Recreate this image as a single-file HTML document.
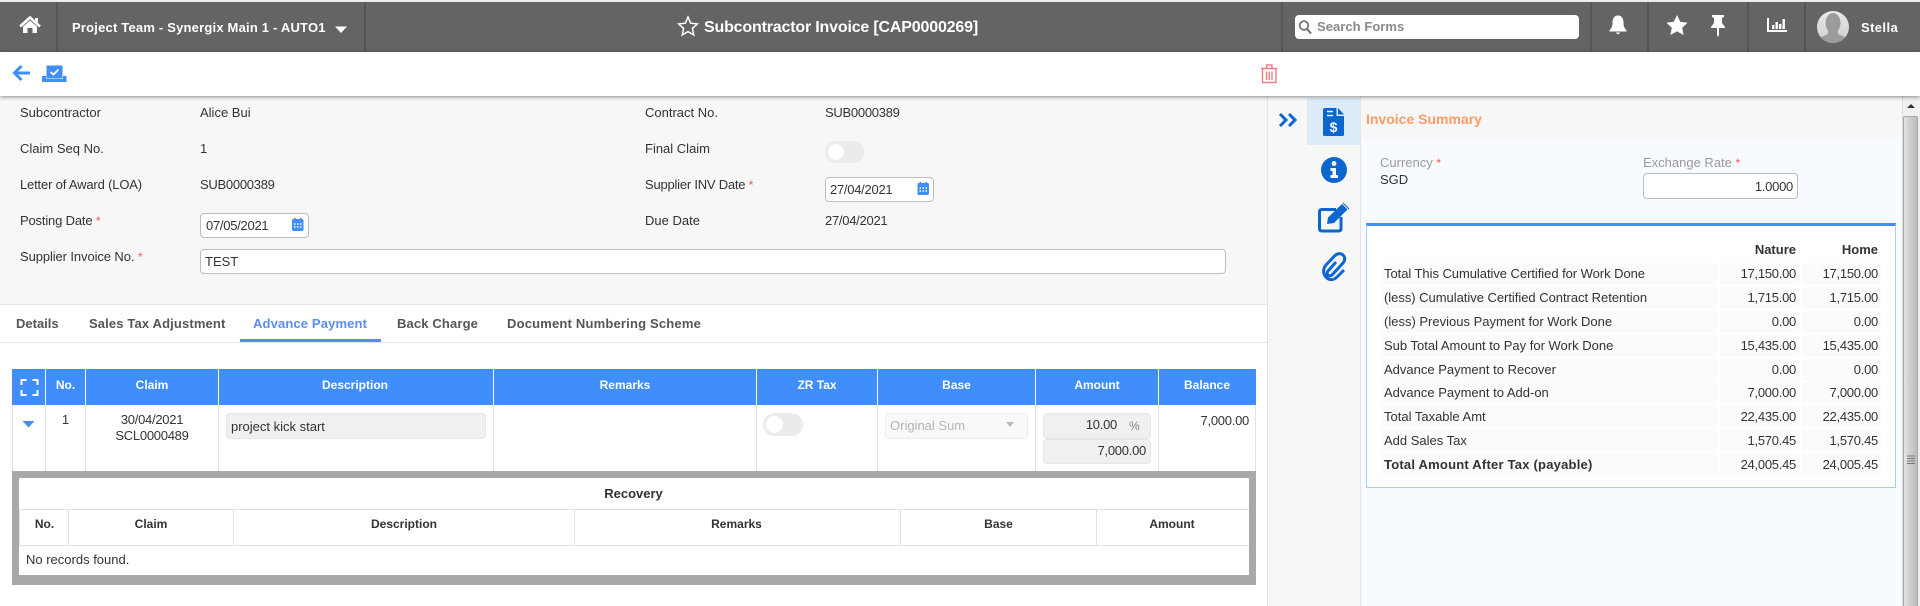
<!DOCTYPE html>
<html><head><meta charset="utf-8"><title>Subcontractor Invoice</title>
<style>
html,body{margin:0;padding:0;width:1920px;height:606px;overflow:hidden;background:#fff}
body{position:relative;font:13px/16px "Liberation Sans",Arial,sans-serif;color:#333}
.a{position:absolute;box-sizing:border-box}
.t{position:absolute;white-space:nowrap;line-height:16px}
.r{text-align:right}
.c{text-align:center}
.b{font-weight:bold}
.w{color:#fff}
.n{letter-spacing:-.27px}
.m{letter-spacing:-.17px}
.tab{letter-spacing:.14px;color:#555;font-weight:bold}
.st{color:#f55;font-size:12px}
.inp{position:absolute;box-sizing:border-box;background:#fff;border:1px solid #bdbdbd;border-radius:4px}
.dis{position:absolute;box-sizing:border-box;background:#f0f0f0;border:1px solid #e6e6e6;border-radius:4px}
.tg{position:absolute;box-sizing:border-box;background:#ebebeb;border-radius:12px}
.tg i{position:absolute;left:3px;top:3px;background:#fff;border-radius:50%;display:block}
.sep{position:absolute;top:2px;height:50px;width:2px;background:#565656}
.vw{position:absolute;top:369px;height:36px;width:1px;background:#fff}
.vg{position:absolute;top:405px;height:66px;width:1px;background:#e2e2e2}
.vi{position:absolute;top:509px;height:37px;width:1px;background:#e2e2e2}
.cell{position:absolute;background:#fbfbfb;height:21px}
</style></head><body>

<!-- top bar -->
<div class="a" style="left:0;top:0;width:1920px;height:2px;background:#ededed"></div>
<div class="a" style="left:0;top:2px;width:1920px;height:50px;background:#646464"></div>
<div class="sep" style="left:56px"></div>
<div class="sep" style="left:364px"></div>
<div class="sep" style="left:1281px"></div>
<div class="sep" style="left:1590px"></div>
<div class="sep" style="left:1647px"></div>
<div class="sep" style="left:1747px"></div>
<div class="sep" style="left:1804px"></div>
<div class="t b w" style="left:72px;top:20px;letter-spacing:.2px">Project Team - Synergix Main 1 - AUTO1</div>
<div class="t b w" style="left:704px;top:20px;font-size:16px;letter-spacing:-.18px">Subcontractor Invoice [CAP0000269]</div>
<div class="a" style="left:1295px;top:15px;width:284px;height:24px;background:#fff;border-radius:4px"></div>
<div class="t b" style="left:1317px;top:19px;color:#8a8a8a;letter-spacing:.05px">Search Forms</div>
<div class="t b w" style="left:1861px;top:20px;letter-spacing:.4px">Stella</div>

<!-- toolbar -->
<div class="a" style="left:0;top:52px;width:1920px;height:44px;background:#fff;box-shadow:0 1px 4px rgba(0,0,0,.45);z-index:3"></div>

<!-- form -->
<div class="a" style="left:0;top:96px;width:1267px;height:208px;background:#f7f7f7"></div>
<div class="a" style="left:0;top:304px;width:1267px;height:1px;background:#e4e4e4"></div>
<div class="t" style="left:20px;top:105px">Subcontractor</div>
<div class="t" style="left:200px;top:105px">Alice Bui</div>
<div class="t" style="left:20px;top:141px">Claim Seq No.</div>
<div class="t" style="left:200px;top:141px">1</div>
<div class="t m" style="left:20px;top:177px">Letter of Award (LOA)</div>
<div class="t n" style="left:200px;top:177px">SUB0000389</div>
<div class="t m" style="left:20px;top:213px">Posting Date <span class="st">*</span></div>
<div class="inp" style="left:200px;top:213px;width:109px;height:25px"></div>
<div class="t n" style="left:206px;top:218px">07/05/2021</div>
<div class="t m" style="left:20px;top:249px;letter-spacing:-.1px">Supplier Invoice No. <span class="st">*</span></div>
<div class="inp" style="left:200px;top:249px;width:1026px;height:25px"></div>
<div class="t" style="left:205px;top:254px">TEST</div>

<div class="t" style="left:645px;top:105px">Contract No.</div>
<div class="t n" style="left:825px;top:105px">SUB0000389</div>
<div class="t" style="left:645px;top:141px">Final Claim</div>
<div class="tg" style="left:825px;top:141px;width:39px;height:22px"><i style="width:16px;height:16px"></i></div>
<div class="t" style="left:645px;top:177px;letter-spacing:-.22px">Supplier INV Date <span class="st">*</span></div>
<div class="inp" style="left:825px;top:177px;width:109px;height:25px"></div>
<div class="t n" style="left:830px;top:182px">27/04/2021</div>
<div class="t" style="left:645px;top:213px">Due Date</div>
<div class="t n" style="left:825px;top:213px">27/04/2021</div>

<!-- tabs -->
<div class="a" style="left:0;top:342px;width:1267px;height:1px;background:#e4e4e4"></div>
<div class="t tab" style="left:16px;top:316px;letter-spacing:0">Details</div>
<div class="t tab" style="left:89px;top:316px">Sales Tax Adjustment</div>
<div class="t tab" style="left:253px;top:316px;color:#5b8def">Advance Payment</div>
<div class="a" style="left:240px;top:339px;width:141px;height:3px;background:#5b8def"></div>
<div class="t tab" style="left:397px;top:316px">Back Charge</div>
<div class="t tab" style="left:507px;top:316px;letter-spacing:.19px">Document Numbering Scheme</div>

<!-- grid -->
<div class="a" style="left:12px;top:369px;width:1244px;height:36px;background:#3f8efc"></div>
<div class="vw" style="left:45px"></div><div class="vw" style="left:85px"></div><div class="vw" style="left:218px"></div><div class="vw" style="left:493px"></div><div class="vw" style="left:756px"></div><div class="vw" style="left:877px"></div><div class="vw" style="left:1035px"></div><div class="vw" style="left:1158px"></div>
<div class="t b w c" style="left:46px;width:39px;top:377px;font-size:12px">No.</div>
<div class="t b w c" style="left:86px;width:132px;top:377px;font-size:12px">Claim</div>
<div class="t b w c" style="left:218px;width:274px;top:377px;font-size:12px">Description</div>
<div class="t b w c" style="left:494px;width:262px;top:377px;font-size:12px">Remarks</div>
<div class="t b w c" style="left:757px;width:120px;top:377px;font-size:12px">ZR Tax</div>
<div class="t b w c" style="left:878px;width:157px;top:377px;font-size:12px">Base</div>
<div class="t b w c" style="left:1036px;width:122px;top:377px;font-size:12px">Amount</div>
<div class="t b w c" style="left:1159px;width:96px;top:377px;font-size:12px">Balance</div>

<div class="vg" style="left:12px"></div><div class="vg" style="left:45px"></div><div class="vg" style="left:85px"></div><div class="vg" style="left:218px"></div><div class="vg" style="left:493px"></div><div class="vg" style="left:756px"></div><div class="vg" style="left:877px"></div><div class="vg" style="left:1035px"></div><div class="vg" style="left:1158px"></div><div class="vg" style="left:1255px"></div>
<div class="t c" style="left:46px;width:39px;top:412px">1</div>
<div class="t c n" style="left:86px;width:132px;top:412px">30/04/2021</div>
<div class="t c n" style="left:86px;width:132px;top:428px">SCL0000489</div>
<div class="dis" style="left:226px;top:413px;width:260px;height:26px"></div>
<div class="t" style="left:231px;top:419px">project kick start</div>
<div class="tg" style="left:763px;top:413px;width:40px;height:23px"><i style="width:17px;height:17px"></i></div>
<div class="dis" style="left:885px;top:413px;width:143px;height:26px;background:#f9f9f9;border-color:#ececec"></div>
<div class="t" style="left:890px;top:418px;color:#b5b5b5">Original Sum</div>
<div class="dis" style="left:1043px;top:413px;width:108px;height:26px"></div>
<div class="dis" style="left:1043px;top:439px;width:108px;height:25px"></div>
<div class="t r n" style="left:1060px;width:57px;top:417px">10.00</div>
<div class="t" style="left:1129px;top:418px;color:#888;font-size:12px">%</div>
<div class="t r n" style="left:1060px;width:86px;top:443px">7,000.00</div>
<div class="t r n" style="left:1160px;width:89px;top:413px">7,000.00</div>

<!-- recovery -->
<div class="a" style="left:12px;top:471px;width:1244px;height:114px;background:#a9a9a9"></div>
<div class="a" style="left:19px;top:478px;width:1230px;height:97px;background:#fff"></div>
<div class="t b c" style="left:18px;width:1231px;top:486px">Recovery</div>
<div class="a" style="left:19px;top:509px;width:1230px;height:1px;background:#e2e2e2"></div>
<div class="a" style="left:19px;top:545px;width:1230px;height:1px;background:#e2e2e2"></div>
<div class="vi" style="left:19px"></div><div class="vi" style="left:68px"></div><div class="vi" style="left:233px"></div><div class="vi" style="left:574px"></div><div class="vi" style="left:900px"></div><div class="vi" style="left:1096px"></div>
<div class="t b c" style="left:20px;width:49px;top:516px;font-size:12px">No.</div>
<div class="t b c" style="left:69px;width:164px;top:516px;font-size:12px">Claim</div>
<div class="t b c" style="left:234px;width:340px;top:516px;font-size:12px">Description</div>
<div class="t b c" style="left:574px;width:325px;top:516px;font-size:12px">Remarks</div>
<div class="t b c" style="left:901px;width:195px;top:516px;font-size:12px">Base</div>
<div class="t b c" style="left:1096px;width:152px;top:516px;font-size:12px">Amount</div>
<div class="t" style="left:26px;top:552px">No records found.</div>

<!-- sidebar -->
<div class="a" style="left:1267px;top:96px;width:94px;height:510px;background:#f7f7f7;border-left:1px solid #e4e4e4;border-right:1px solid #e4e4e4"></div>
<div class="a" style="left:1307px;top:98px;width:53px;height:47px;background:#deebf9"></div>

<!-- right panel -->
<div class="a" style="left:1361px;top:96px;width:541px;height:42px;background:#f7f7f7"></div>
<div class="a" style="left:1361px;top:138px;width:541px;height:468px;background:#f7fbff"></div>
<div class="t b" style="left:1366px;top:111px;color:#ff9a66;font-size:14px">Invoice Summary</div>
<div class="t" style="left:1380px;top:155px;color:#9a9a9a">Currency <span class="st">*</span></div>
<div class="t" style="left:1380px;top:172px">SGD</div>
<div class="t" style="left:1643px;top:155px;color:#9a9a9a">Exchange Rate <span class="st">*</span></div>
<div class="inp" style="left:1643px;top:173px;width:155px;height:26px"></div>
<div class="t r n" style="left:1650px;width:143px;top:179px">1.0000</div>

<div class="a" style="left:1366px;top:223px;width:530px;height:265px;background:#fff;border:1px solid #a8cdfc;border-top:3px solid #3f8efc"></div>
<div class="t b r" style="left:1720px;width:76px;top:242px">Nature</div>
<div class="t b r" style="left:1802px;width:76px;top:242px">Home</div>

<div class="cell" style="left:1381px;width:336px;top:263px"></div><div class="cell" style="left:1720px;width:79px;top:263px"></div><div class="cell" style="left:1802px;width:79px;top:263px"></div>
<div class="t" style="left:1384px;top:266px;letter-spacing:-.05px">Total This Cumulative Certified for Work Done</div><div class="t r n" style="left:1720px;width:76px;top:266px">17,150.00</div><div class="t r n" style="left:1802px;width:76px;top:266px">17,150.00</div>

<div class="cell" style="left:1381px;width:336px;top:287px"></div><div class="cell" style="left:1720px;width:79px;top:287px"></div><div class="cell" style="left:1802px;width:79px;top:287px"></div>
<div class="t" style="left:1384px;top:290px;letter-spacing:-.03px">(less) Cumulative Certified Contract Retention</div><div class="t r n" style="left:1720px;width:76px;top:290px">1,715.00</div><div class="t r n" style="left:1802px;width:76px;top:290px">1,715.00</div>

<div class="cell" style="left:1381px;width:336px;top:311px"></div><div class="cell" style="left:1720px;width:79px;top:311px"></div><div class="cell" style="left:1802px;width:79px;top:311px"></div>
<div class="t" style="left:1384px;top:314px">(less) Previous Payment for Work Done</div><div class="t r n" style="left:1720px;width:76px;top:314px">0.00</div><div class="t r n" style="left:1802px;width:76px;top:314px">0.00</div>

<div class="cell" style="left:1381px;width:336px;top:335px"></div><div class="cell" style="left:1720px;width:79px;top:335px"></div><div class="cell" style="left:1802px;width:79px;top:335px"></div>
<div class="t" style="left:1384px;top:338px">Sub Total Amount to Pay for Work Done</div><div class="t r n" style="left:1720px;width:76px;top:338px">15,435.00</div><div class="t r n" style="left:1802px;width:76px;top:338px">15,435.00</div>

<div class="cell" style="left:1381px;width:336px;top:359px"></div><div class="cell" style="left:1720px;width:79px;top:359px"></div><div class="cell" style="left:1802px;width:79px;top:359px"></div>
<div class="t" style="left:1384px;top:362px">Advance Payment to Recover</div><div class="t r n" style="left:1720px;width:76px;top:362px">0.00</div><div class="t r n" style="left:1802px;width:76px;top:362px">0.00</div>

<div class="cell" style="left:1381px;width:336px;top:382px"></div><div class="cell" style="left:1720px;width:79px;top:382px"></div><div class="cell" style="left:1802px;width:79px;top:382px"></div>
<div class="t" style="left:1384px;top:385px">Advance Payment to Add-on</div><div class="t r n" style="left:1720px;width:76px;top:385px">7,000.00</div><div class="t r n" style="left:1802px;width:76px;top:385px">7,000.00</div>

<div class="cell" style="left:1381px;width:336px;top:406px"></div><div class="cell" style="left:1720px;width:79px;top:406px"></div><div class="cell" style="left:1802px;width:79px;top:406px"></div>
<div class="t" style="left:1384px;top:409px">Total Taxable Amt</div><div class="t r n" style="left:1720px;width:76px;top:409px">22,435.00</div><div class="t r n" style="left:1802px;width:76px;top:409px">22,435.00</div>

<div class="cell" style="left:1381px;width:336px;top:430px"></div><div class="cell" style="left:1720px;width:79px;top:430px"></div><div class="cell" style="left:1802px;width:79px;top:430px"></div>
<div class="t" style="left:1384px;top:433px">Add Sales Tax</div><div class="t r n" style="left:1720px;width:76px;top:433px">1,570.45</div><div class="t r n" style="left:1802px;width:76px;top:433px">1,570.45</div>

<div class="cell" style="left:1381px;width:336px;top:454px"></div><div class="cell" style="left:1720px;width:79px;top:454px"></div><div class="cell" style="left:1802px;width:79px;top:454px"></div>
<div class="t b" style="left:1384px;top:457px;letter-spacing:.22px">Total Amount After Tax (payable)</div><div class="t r n" style="left:1720px;width:76px;top:457px">24,005.45</div><div class="t r n" style="left:1802px;width:76px;top:457px">24,005.45</div>

<!-- scrollbar -->
<div class="a" style="left:1902px;top:96px;width:18px;height:510px;background:#f0f0f0;border-left:1px solid #dcdcdc"></div>
<div class="a" style="left:1903px;top:116px;width:15px;height:490px;background:linear-gradient(90deg,#e4e4e4,#d0d0d0 40%,#bcbcbc);border:1px solid #a8a8a8;border-bottom:0;border-radius:2px 2px 0 0"></div>

<!-- icons overlay -->
<svg class="a" style="left:0;top:0;z-index:5" width="1920" height="606" viewBox="0 0 1920 606">
 <!-- home -->
 <polyline points="20,26.5 30,17.5 40,26.5" fill="none" stroke="#fff" stroke-width="2.6"/>
 <rect x="35" y="18" width="3" height="5" fill="#fff"/>
 <path d="M23 26.5L30 20.5L37 26.5V33H32.5V28H27.5V33H23Z" fill="#fff"/>
 <!-- caret -->
 <path d="M335 26.5H347L341 33Z" fill="#fff"/>
 <!-- title star -->
 <path d="M688 17L690.7 23.2L697.3 23.9L692.4 28.4L693.8 35L688 31.6L682.2 35L683.6 28.4L678.7 23.9L685.3 23.2Z" fill="none" stroke="#fff" stroke-width="1.5"/>
 <!-- search icon -->
 <circle cx="1304" cy="25.5" r="4.3" fill="none" stroke="#777" stroke-width="1.8"/>
 <line x1="1307" y1="29" x2="1311" y2="33.5" stroke="#777" stroke-width="2.2"/>
 <!-- bell -->
 <path d="M1618 15.5C1622 15.5 1623.5 19 1623.5 23C1623.5 27 1625 28.5 1626.5 30.5V31.5H1609.5V30.5C1611 28.5 1612.5 27 1612.5 23C1612.5 19 1614 15.5 1618 15.5Z" fill="#fff"/>
 <path d="M1615.5 32.5H1620.5L1618 34.5Z" fill="#fff"/>
 <!-- star filled -->
 <path d="M1677 15L1680.2 21.8L1687.6 22.7L1682.2 27.7L1683.6 35L1677 31.4L1670.4 35L1671.8 27.7L1666.4 22.7L1673.8 21.8Z" fill="#fff"/>
 <!-- pin -->
 <path d="M1712 15H1724V17L1722 18V23L1725 27V28H1719V35L1718 37L1717 35V28H1711V27L1714 23V18L1712 17Z" fill="#fff"/>
 <!-- chart -->
 <path d="M1768 18V31H1787" fill="none" stroke="#fff" stroke-width="2"/>
 <rect x="1772" y="25" width="2.4" height="4" fill="#fff"/><rect x="1775.5" y="22" width="2.4" height="7" fill="#fff"/><rect x="1779" y="24" width="2.4" height="5" fill="#fff"/><rect x="1782.5" y="19" width="2.4" height="10" fill="#fff"/>
 <!-- avatar -->
 <defs><clipPath id="av"><circle cx="1833" cy="27" r="16"/></clipPath><linearGradient id="ag" x1="0" y1="0" x2="0" y2="1"><stop offset="0" stop-color="#e8e8e8"/><stop offset="1" stop-color="#cfcfcf"/></linearGradient></defs>
 <circle cx="1833" cy="27" r="16" fill="url(#ag)"/>
 <g clip-path="url(#av)" fill="#9b9b9b"><ellipse cx="1833" cy="23" rx="7.5" ry="10"/><path d="M1828 30H1838V34L1847 38V44H1819V38L1828 34Z"/></g>
 <!-- back -->
 <g fill="none" stroke="#3f8efc" stroke-width="3"><polyline points="21.5,66 14.5,73 21.5,80"/><line x1="15" y1="73" x2="30" y2="73"/></g>
 <!-- save/approve -->
 <rect x="46.5" y="65.5" width="16" height="13" fill="#3f8efc"/>
 <path d="M50.5 72L53.5 74.5L58.5 69.5" fill="none" stroke="#fff" stroke-width="1.8"/>
 <path d="M42 76H46V79H63V76H66.5V82H42Z" fill="#3f8efc"/>
 <!-- trash -->
 <g fill="none" stroke="#f47c85" stroke-width="1.4"><path d="M1261 68.5H1277.5M1266.5 68.5V65H1272V68.5M1262.5 68.5V82.5H1276V68.5M1266.5 71.5V80M1269.3 71.5V80M1272 71.5V80"/></g>
 <!-- calendars -->
 <g><rect x="292" y="219" width="11.5" height="12" rx="1.5" fill="#3f8efc"/><rect x="294" y="218" width="1.6" height="2.5" fill="#3f8efc"/><rect x="300" y="218" width="1.6" height="2.5" fill="#3f8efc"/><path d="M294 224h1.5M297 224h1.5M300 224h1.5M294 227h1.5M297 227h1.5M300 227h1.5" stroke="#fff" stroke-width="1.4"/></g>
 <g transform="translate(625.5,-36)"><rect x="292" y="219" width="11.5" height="12" rx="1.5" fill="#3f8efc"/><rect x="294" y="218" width="1.6" height="2.5" fill="#3f8efc"/><rect x="300" y="218" width="1.6" height="2.5" fill="#3f8efc"/><path d="M294 224h1.5M297 224h1.5M300 224h1.5M294 227h1.5M297 227h1.5M300 227h1.5" stroke="#fff" stroke-width="1.4"/></g>
 <!-- sidebar icons -->
 <g fill="none" stroke="#0b66d0" stroke-width="3"><polyline points="1280,114 1286,120 1280,126"/><polyline points="1289,114 1295,120 1289,126"/></g>
 <path d="M1325 108H1336.5V116H1344V134.5Q1344 136 1342.5 136H1324.5Q1323 136 1323 134.5V110Q1323 108 1325 108Z" fill="#0b66d0"/>
 <path d="M1338 108L1344 114.5H1338Z" fill="#0b66d0"/>
 <path d="M1327 111.5H1333M1327 115.5H1333" stroke="#fff" stroke-width="1.4"/>
 <text x="1333.5" y="132" font-family="Liberation Sans,sans-serif" font-size="14" font-weight="bold" fill="#fff" text-anchor="middle">$</text>
 <circle cx="1334" cy="170" r="13" fill="#0b66d0"/>
 <circle cx="1334" cy="163.5" r="2.4" fill="#fff"/>
 <path d="M1330.5 168H1336V175H1338V178H1330.5V175H1332.5V171H1330.5Z" fill="#fff"/>
 <path d="M1341 217V228.5Q1341 231 1338.5 231H1322Q1319.5 231 1319.5 228.5V212Q1319.5 209.5 1322 209.5H1336" fill="none" stroke="#0b66d0" stroke-width="3"/>
 <path d="M1327 224L1328 217.5L1342 204L1347.5 209.5L1334 223Z" fill="#0b66d0"/>
 <path d="M1343 203L1345 205L1349 209" stroke="#0b66d0" stroke-width="1"/>
 <path d="M1336 262L1328 271C1325.5 274 1329 277.5 1332 275L1343 263C1348 257.5 1341 250 1335 255.5L1326 265C1319 273 1329 285 1337 277L1344 270" fill="none" stroke="#0b66d0" stroke-width="3"/>
 <!-- grid icons -->
 <g fill="none" stroke="#fff" stroke-width="2"><path d="M21.5 385V380H26.5M32.5 380H37.5V385M21.5 390V395H26.5M32.5 395H37.5V390"/></g>
 <path d="M22.5 421H34.5L28.5 427.5Z" fill="#3f8efc"/>
 <path d="M1006 422H1014L1010 427Z" fill="#b8b8b8"/>
 <!-- scroll arrow & grip -->
 <path d="M1907 108L1911 104L1915 108Z" fill="#333"/>
 <path d="M1907 456H1915M1907 458.5H1915M1907 461H1915M1907 463.5H1915" stroke="#777" stroke-width="1"/>
</svg>
</body></html>
